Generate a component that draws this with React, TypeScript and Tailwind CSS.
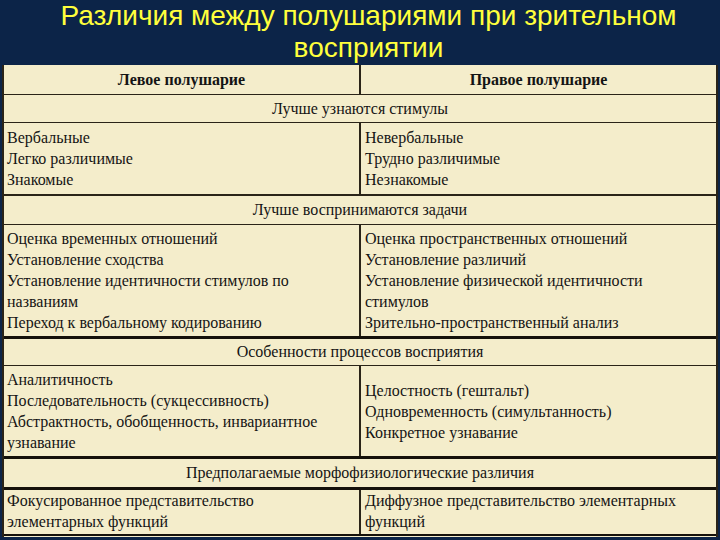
import React from "react";

function SpanRow({ text, h }: { text: string; h: string }) {
  return (
    <div className={`flex items-center justify-center ${h} text-[16px] text-[#141414]`}>
      {text}
    </div>
  );
}

function TwoCol({
  left,
  right,
  h,
  rightCenter,
  pt,
}: {
  left: string[];
  right: string[];
  h: string;
  rightCenter?: boolean;
  pt: string;
}) {
  return (
    <div className={`grid grid-cols-[357px_1fr] ${h} text-[16px] leading-[21px] text-[#141414]`}>
      <div className={`border-r-2 border-[#2a2418] pl-[3px] ${pt}`}>
        {left.map((l, i) => (
          <div key={i}>{l}</div>
        ))}
      </div>
      <div className={`pl-[4px] ${rightCenter ? "flex flex-col justify-center" : pt}`}>
        {right.map((l, i) => (
          <div key={i}>{l}</div>
        ))}
      </div>
    </div>
  );
}

export default function App() {
  return (
    <div className="w-[720px] h-[540px] overflow-hidden bg-[#0c2448]">
      <div className="pl-[17px] text-center text-[28px] leading-[32px] text-[#ffff3c] font-['Liberation_Sans',Arial,sans-serif]">
        <div>Различия между полушариями при зрительном</div>
        <div>восприятии</div>
      </div>
      <div className="mt-px ml-[2px] mr-[2px] h-[472px] bg-[#f4edcb] border-l-2 border-r-2 border-[#2a2418] font-['Liberation_Serif','Times_New_Roman',serif]">
        <div className="grid grid-cols-[357px_1fr] h-[30px] text-[16px] font-bold text-[#141414] border-b border-[#2a2418]">
          <div className="flex items-center justify-center border-r-2 border-[#2a2418]">
            Левое полушарие
          </div>
          <div className="flex items-center justify-center">Правое полушарие</div>
        </div>
        <div className="border-b border-[#2a2418]">
          <SpanRow text="Лучше узнаются стимулы" h="h-[27px]" />
        </div>
        <div className="border-b-2 border-[#2a2418]">
          <TwoCol
            h="h-[71px]"
            pt="pt-[4px]"
            left={["Вербальные", "Легко различимые", "Знакомые"]}
            right={["Невербальные", "Трудно различимые", "Незнакомые"]}
          />
        </div>
        <div className="border-b border-[#2a2418]">
          <SpanRow text="Лучше воспринимаются задачи" h="h-[28px]" />
        </div>
        <div className="border-b-[3px] border-[#15110a]">
          <TwoCol
            h="h-[111px]"
            pt="pt-[3px]"
            left={[
              "Оценка временных отношений",
              "Установление сходства",
              "Установление идентичности стимулов по",
              "названиям",
              "Переход к вербальному кодированию",
            ]}
            right={[
              "Оценка пространственных отношений",
              "Установление различий",
              "Установление физической идентичности",
              "стимулов",
              "Зрительно-пространственный анализ",
            ]}
          />
        </div>
        <div className="border-b border-[#2a2418]">
          <SpanRow text="Особенности процессов восприятия" h="h-[26px]" />
        </div>
        <div className="border-b-[3px] border-[#15110a]">
          <TwoCol
            h="h-[90px]"
            pt="pt-[3px]"
            rightCenter
            left={[
              "Аналитичность",
              "Последовательность (сукцессивность)",
              "Абстрактность, обобщенность, инвариантное",
              "узнавание",
            ]}
            right={[
              "Целостность (гештальт)",
              "Одновременность (симультанность)",
              "Конкретное узнавание",
            ]}
          />
        </div>
        <div className="border-b-[3px] border-[#15110a]">
          <SpanRow text="Предполагаемые морфофизиологические различия" h="h-[28px]" />
        </div>
        <div className="border-b-2 border-[#15110a]">
          <TwoCol
            h="h-[44px]"
            pt="pt-0"
            left={["Фокусированное представительство", "элементарных функций"]}
            right={["Диффузное представительство элементарных", "функций"]}
          />
        </div>
      </div>
    </div>
  );
}
